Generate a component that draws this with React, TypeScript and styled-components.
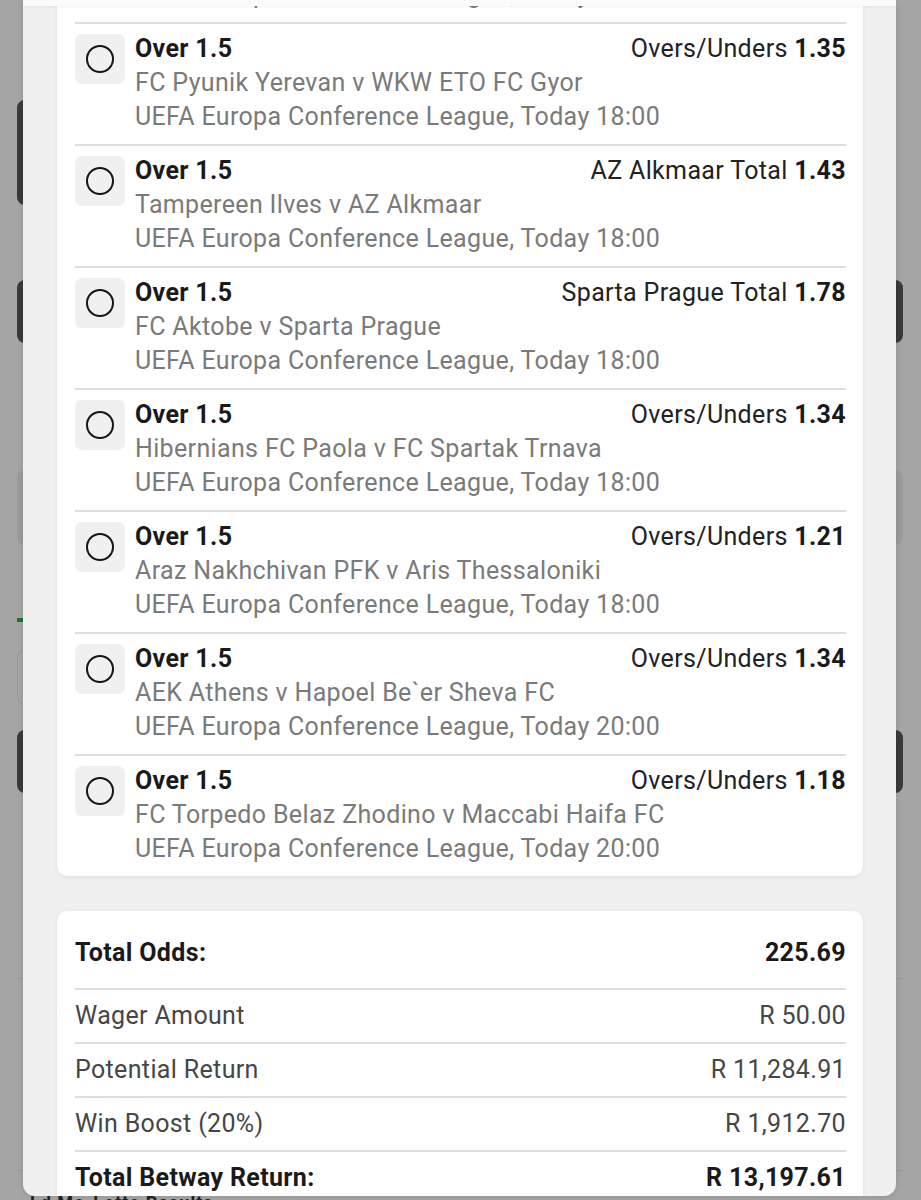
import React from "react";
import styled, { createGlobalStyle } from "styled-components";

const GlobalStyle = createGlobalStyle`
  html, body {
    margin: 0;
    padding: 0;
    height: 1200px;
    overflow: hidden;
    font-family: Roboto, "Noto Sans", "Liberation Sans", sans-serif;
  }
  * { box-sizing: border-box; }
`;

interface Leg {
  pick: string;
  market: string;
  odds: string;
  match: string;
  time: string;
}

const legs: Leg[] = [
  { pick: "Over 1.5", market: "Overs/Unders", odds: "1.29", match: "Dinamo Batumi v Slovan Bratislava", time: "Today 18:00" },
  { pick: "Over 1.5", market: "Overs/Unders", odds: "1.35", match: "FC Pyunik Yerevan v WKW ETO FC Gyor", time: "Today 18:00" },
  { pick: "Over 1.5", market: "AZ Alkmaar Total", odds: "1.43", match: "Tampereen Ilves v AZ Alkmaar", time: "Today 18:00" },
  { pick: "Over 1.5", market: "Sparta Prague Total", odds: "1.78", match: "FC Aktobe v Sparta Prague", time: "Today 18:00" },
  { pick: "Over 1.5", market: "Overs/Unders", odds: "1.34", match: "Hibernians FC Paola v FC Spartak Trnava", time: "Today 18:00" },
  { pick: "Over 1.5", market: "Overs/Unders", odds: "1.21", match: "Araz Nakhchivan PFK v Aris Thessaloniki", time: "Today 18:00" },
  { pick: "Over 1.5", market: "Overs/Unders", odds: "1.34", match: "AEK Athens v Hapoel Be`er Sheva FC", time: "Today 20:00" },
  { pick: "Over 1.5", market: "Overs/Unders", odds: "1.18", match: "FC Torpedo Belaz Zhodino v Maccabi Haifa FC", time: "Today 20:00" },
];

const summary = [
  { label: "Total Odds:", value: "225.69", strong: true },
  { label: "Wager Amount", value: "R 50.00" },
  { label: "Potential Return", value: "R 11,284.91" },
  { label: "Win Boost (20%)", value: "R 1,912.70" },
  { label: "Total Betway Return:", value: "R 13,197.61", strong: true },
];

const Screen = styled.div`
  position: relative;
  width: 921px;
  height: 1200px;
  background: #a5a5a5;
  overflow: hidden;
`;

/* dimmed page behind the bet slip */
const BgPage = styled.div`
  display: flex;
  flex-direction: column;
  padding: 100px 18px 0 17px;
`;

const BgBlock = styled.div<{ $gap: number; $h: number; $tone: string; $w?: number; $outline?: boolean }>`
  margin-top: ${(p) => p.$gap}px;
  height: ${(p) => p.$h}px;
  width: ${(p) => (p.$w ? `${p.$w}px` : "100%")};
  background: ${(p) => p.$tone};
  border-radius: ${(p) => (p.$h > 10 ? 8 : 0)}px;
  border: ${(p) => (p.$outline ? "1px solid #969696" : "none")};
`;

const BgText = styled.div`
  margin: 21px 0 0 13px;
  font-size: 18px;
  line-height: 22px;
  font-weight: 700;
  color: #222;
  letter-spacing: 1px;
`;

const Sheet = styled.div`
  position: absolute;
  top: 0;
  left: 23px;
  width: 873px;
  height: 1196px;
  background: #f0f0f0;
  border-radius: 0 0 12px 12px;
  overflow: hidden;
  display: flex;
  flex-direction: column;
  box-shadow: 0 0 6px rgba(0, 0, 0, 0.12);
`;

const SheetHeader = styled.div`
  position: relative;
  z-index: 1;
  height: 6px;
  flex-shrink: 0;
  background: #fbfbfb;
  box-shadow: 0 1px 3px rgba(0, 0, 0, 0.05);
`;

const Scroll = styled.div`
  flex: 1;
  overflow: hidden;
  padding: 0 33px 0 34px;
`;

const Card = styled.div<{ $offset?: number }>`
  background: #fff;
  border-radius: 10px;
  padding: 0 17px 0 18px;
  margin-top: ${(p) => p.$offset ?? 0}px;
  box-shadow: 0 1px 4px rgba(0, 0, 0, 0.08);
`;

const Row = styled.div`
  display: flex;
  gap: 10px;
  padding: 8px 0 10px;
  & + & {
    border-top: 2px solid #dedede;
  }
`;

const RadioBox = styled.div`
  flex-shrink: 0;
  width: 50px;
  height: 50px;
  margin-top: 2px;
  border-radius: 7px;
  background: #f0f0f0;
  display: flex;
  align-items: center;
  justify-content: center;
`;

const RadioCircle = styled.span`
  width: 28px;
  height: 28px;
  border-radius: 50%;
  border: 2.5px solid #151515;
`;

const Info = styled.div`
  flex: 1;
  min-width: 0;
  font-size: 25px;
  line-height: 34px;
  letter-spacing: 0.35px;
`;

const TopLine = styled.div`
  display: flex;
  justify-content: space-between;
`;

const Pick = styled.span`
  font-weight: 700;
  color: #1a1a1a;
`;

const Market = styled.span`
  color: #222;
`;

const Odds = styled.b`
  font-weight: 700;
  color: #1a1a1a;
`;

const Sub = styled.div`
  color: #7a7a7a;
  white-space: nowrap;
`;

const SummaryCard = styled(Card)`
  margin-top: 35px;
  padding-top: 16px;
`;

const SumRow = styled.div<{ $first?: boolean }>`
  display: flex;
  justify-content: space-between;
  font-size: 25px;
  line-height: 34px;
  letter-spacing: 0.35px;
  padding: 9px 0 ${(p) => (p.$first ? 18 : 9)}px;
  & + & {
    border-top: 2px solid #dedede;
  }
`;

const SumText = styled.span<{ $strong?: boolean }>`
  color: ${(p) => (p.$strong ? "#1a1a1a" : "#464646")};
  font-weight: ${(p) => (p.$strong ? 700 : 400)};
`;

const BetRow = ({ leg }: { leg: Leg }) => (
  <Row>
    <RadioBox>
      <RadioCircle />
    </RadioBox>
    <Info>
      <TopLine>
        <Pick>{leg.pick}</Pick>
        <Market>
          {leg.market} <Odds>{leg.odds}</Odds>
        </Market>
      </TopLine>
      <Sub>{leg.match}</Sub>
      <Sub>UEFA Europa Conference League, {leg.time}</Sub>
    </Info>
  </Row>
);

export default function App() {
  return (
    <Screen>
      <GlobalStyle />
      <BgPage>
        <BgBlock $gap={0} $h={105} $tone="#3a3a3a" $w={240} />
        <BgBlock $gap={75} $h={63} $tone="#3a3a3a" />
        <BgBlock $gap={127} $h={75} $tone="#9b9b9b" />
        <BgBlock $gap={73} $h={4} $tone="#1e7a24" $w={120} />
        <BgBlock $gap={28} $h={55} $tone="transparent" $w={300} $outline />
        <BgBlock $gap={25} $h={63} $tone="#3a3a3a" />
        <BgBlock $gap={185} $h={1} $tone="#979797" />
        <BgBlock $gap={191} $h={1} $tone="#979797" />
        <BgText>Ld Mo-Lotto Results</BgText>
      </BgPage>

      <Sheet>
        <SheetHeader />
        <Scroll>
          <Card $offset={-104}>
            {legs.map((leg, i) => (
              <BetRow key={i} leg={leg} />
            ))}
          </Card>
          <SummaryCard>
            {summary.map((s, i) => (
              <SumRow key={s.label} $first={i === 0}>
                <SumText $strong={s.strong}>{s.label}</SumText>
                <SumText $strong={s.strong}>{s.value}</SumText>
              </SumRow>
            ))}
          </SummaryCard>
        </Scroll>
      </Sheet>
    </Screen>
  );
}
